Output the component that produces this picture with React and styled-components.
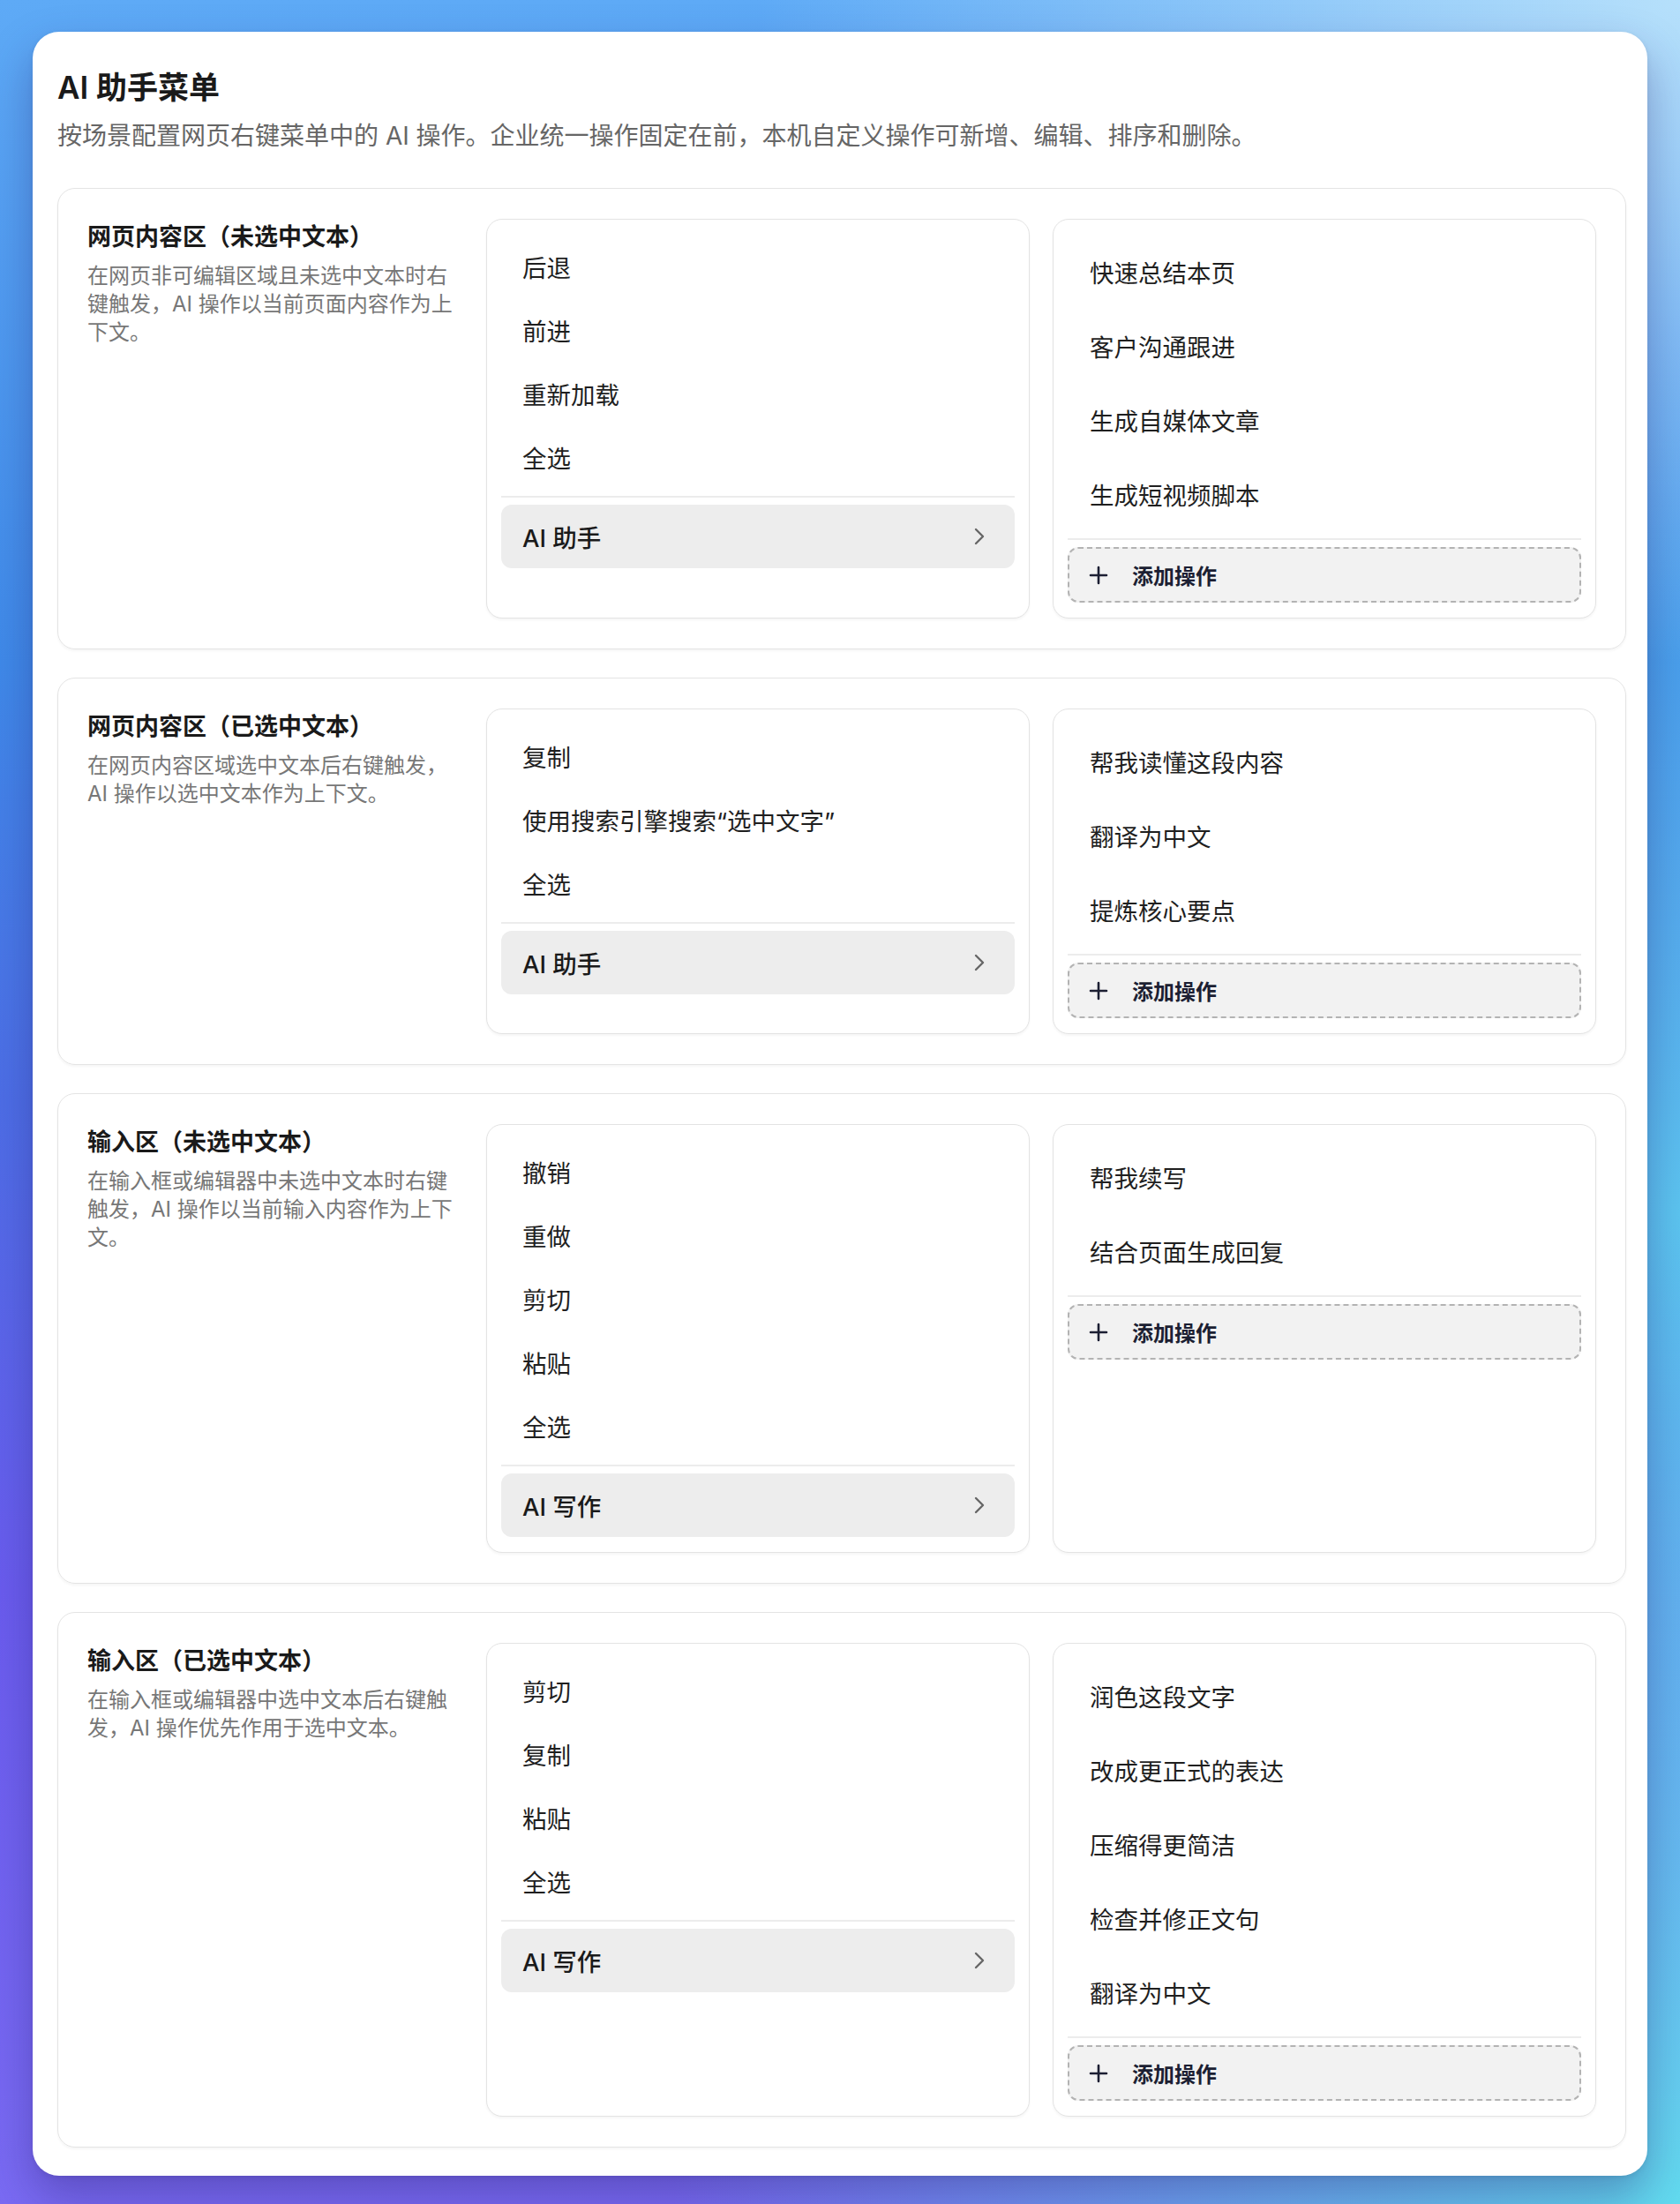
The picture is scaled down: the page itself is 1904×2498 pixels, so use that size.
import React from 'react';
import styled, { createGlobalStyle } from 'styled-components';

const GlobalStyle = createGlobalStyle`
  html, body {
    margin: 0;
    padding: 0;
  }
  body {
    font-family: "Inter", "Noto Sans CJK SC", sans-serif;
    color: #1f1f1f;
  }
  * { box-sizing: border-box; }
`;

const Page = styled.div`
  min-height: 2498px;
  padding: 36px 37px 36px 37px;
  background-color: #6a7cf0;
  background-image:
    radial-gradient(ellipse 55% 30% at 100% 0%, #b6e0fb 0%, rgba(182, 224, 251, 0) 100%),
    radial-gradient(ellipse 60% 45% at 100% 100%, #62dcef 0%, rgba(98, 220, 239, 0) 100%),
    radial-gradient(ellipse 50% 40% at 100% 55%, #5cc6f0 0%, rgba(92, 198, 240, 0) 100%),
    linear-gradient(180deg, #5eaaf6 0%, #3f8ae9 30%, #4d6ee6 50%, #6a5cee 72%, #7a6bf3 100%);
`;

const Card = styled.main`
  background: #fff;
  border-radius: 30px;
  padding: 40px 24px 32px 28px;
  box-shadow: 0 24px 50px rgba(40, 30, 110, 0.35), 0 2px 6px rgba(0, 0, 0, 0.08);
`;

const Title = styled.h1`
  margin: 0;
  font-size: 35px;
  line-height: 46px;
  font-weight: 600;
  color: #1a1a1a;
`;

const Subtitle = styled.p`
  margin: 12px 0 0;
  font-size: 28px;
  line-height: 40px;
  color: #666;
`;

const SectionList = styled.div`
  margin-top: 39px;
  display: flex;
  flex-direction: column;
  gap: 32px;
`;

const Section = styled.section`
  display: grid;
  grid-template-columns: 426px 1fr 1fr;
  gap: 26px;
  align-items: stretch;
  padding: 34px 33px;
  border: 1px solid #e4e4e4;
  border-radius: 20px;
  box-shadow: 0 2px 3px rgba(0, 0, 0, 0.04);
`;

const Info = styled.div`
  padding-top: 3px;
`;

const SectionTitle = styled.h2`
  margin: 0;
  font-size: 27px;
  line-height: 36px;
  font-weight: 600;
  color: #1a1a1a;
`;

const SectionDesc = styled.p`
  margin: 10px 0 0;
  font-size: 24px;
  line-height: 32px;
  color: #777;
`;

const Menu = styled.div`
  display: flex;
  flex-direction: column;
  padding: 17px 16px;
  border: 1px solid #e3e3e3;
  border-radius: 18px;
  background: #fff;
  box-shadow: 0 2px 3px rgba(0, 0, 0, 0.04);
`;

const Item = styled.div`
  display: flex;
  align-items: center;
  height: ${p => (p.$tall ? 84 : 72)}px;
  padding-left: ${p => (p.$tall ? 25 : 24)}px;
  font-size: 27.5px;
  color: #1f1f1f;
  white-space: nowrap;
`;

const Divider = styled.div`
  height: 2px;
  margin: 8px 0;
  background: #ececec;
`;

const SubmenuRow = styled.div`
  display: flex;
  align-items: center;
  justify-content: space-between;
  height: 72px;
  padding: 0 34px 0 24px;
  border-radius: 12px;
  background: #ededed;
  font-size: 27.5px;
  font-weight: 500;
  color: #1a1a1a;
`;

const AddButton = styled.button`
  display: flex;
  align-items: center;
  gap: 27px;
  height: 63px;
  padding: 0 0 0 22px;
  border: 2px dashed #b3b3b3;
  border-radius: 12px;
  background: #f2f2f2;
  font-family: inherit;
  font-size: 24px;
  font-weight: 600;
  color: #1c1f33;
  text-align: left;
  cursor: pointer;
`;

const Chevron = () => (
  <svg width="12" height="20" viewBox="0 0 12 20" fill="none">
    <polyline points="2,2 10,10 2,18" stroke="#666" strokeWidth="2.4" strokeLinecap="round" strokeLinejoin="round" />
  </svg>
);

const PlusIcon = () => (
  <svg width="22" height="22" viewBox="0 0 22 22" fill="none">
    <path d="M11 2v18M2 11h18" stroke="#1c1f33" strokeWidth="2.6" strokeLinecap="round" />
  </svg>
);

const sections = [
  {
    title: '网页内容区（未选中文本）',
    desc: '在网页非可编辑区域且未选中文本时右键触发，AI 操作以当前页面内容作为上下文。',
    system: ['后退', '前进', '重新加载', '全选'],
    submenu: 'AI 助手',
    custom: ['快速总结本页', '客户沟通跟进', '生成自媒体文章', '生成短视频脚本'],
  },
  {
    title: '网页内容区（已选中文本）',
    desc: '在网页内容区域选中文本后右键触发，AI 操作以选中文本作为上下文。',
    system: ['复制', '使用搜索引擎搜索“选中文字”', '全选'],
    submenu: 'AI 助手',
    custom: ['帮我读懂这段内容', '翻译为中文', '提炼核心要点'],
  },
  {
    title: '输入区（未选中文本）',
    desc: '在输入框或编辑器中未选中文本时右键触发，AI 操作以当前输入内容作为上下文。',
    system: ['撤销', '重做', '剪切', '粘贴', '全选'],
    submenu: 'AI 写作',
    custom: ['帮我续写', '结合页面生成回复'],
  },
  {
    title: '输入区（已选中文本）',
    desc: '在输入框或编辑器中选中文本后右键触发，AI 操作优先作用于选中文本。',
    system: ['剪切', '复制', '粘贴', '全选'],
    submenu: 'AI 写作',
    custom: ['润色这段文字', '改成更正式的表达', '压缩得更简洁', '检查并修正文句', '翻译为中文'],
  },
];

export default function App() {
  return (
    <Page>
      <GlobalStyle />
      <Card>
        <Title>AI 助手菜单</Title>
        <Subtitle>按场景配置网页右键菜单中的 AI 操作。企业统一操作固定在前，本机自定义操作可新增、编辑、排序和删除。</Subtitle>
        <SectionList>
          {sections.map(s => (
            <Section key={s.title}>
              <Info>
                <SectionTitle>{s.title}</SectionTitle>
                <SectionDesc>{s.desc}</SectionDesc>
              </Info>
              <Menu>
                {s.system.map(label => (
                  <Item key={label}>{label}</Item>
                ))}
                <Divider />
                <SubmenuRow>
                  <span>{s.submenu}</span>
                  <Chevron />
                </SubmenuRow>
              </Menu>
              <Menu>
                {s.custom.map(label => (
                  <Item key={label} $tall>{label}</Item>
                ))}
                <Divider />
                <AddButton type="button">
                  <PlusIcon />
                  添加操作
                </AddButton>
              </Menu>
            </Section>
          ))}
        </SectionList>
      </Card>
    </Page>
  );
}
